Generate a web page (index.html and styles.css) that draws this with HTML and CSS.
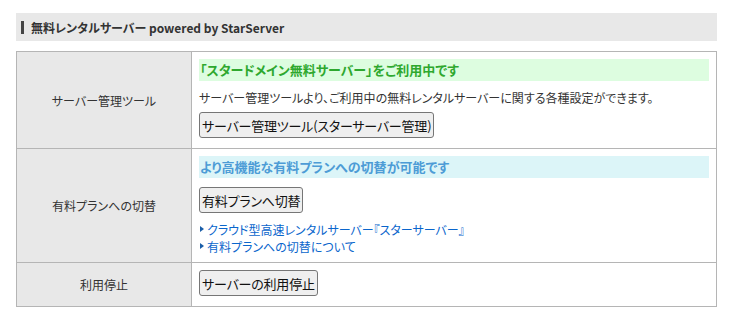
FILE: index.html
```html
<!DOCTYPE html>
<html lang="ja">
<head>
    <meta charset="UTF-8">
    <title>無料レンタルサーバー</title>
    <link rel="stylesheet" href="styles.css">
</head>
<body>
<div class='wrap'>
    <h2 class='boxTitle'>無料レンタルサーバー powered by StarServer</h2>
    <table class='setTable'>
        <tr>
            <th>サーバー管理ツール</th>
            <td>
                <p class='status statusFree'>「スタードメイン無料サーバー」をご利用中です</p>
                <p class='desc'>サーバー管理ツールより、ご利用中の無料レンタルサーバーに関する各種設定ができます。</p>
                <button class='btn'>サーバー管理ツール(スターサーバー管理)</button>
            </td>
        </tr>
        <tr>
            <th>有料プランへの切替</th>
            <td>
                <p class='status statusPaid'>より高機能な有料プランへの切替が可能です</p>
                <button class='btn'>有料プランへ切替</button>
                <ul class='links'>
                    <li><a href="javascript:;">クラウド型高速レンタルサーバー『スターサーバー』</a></li>
                    <li><a href="javascript:;">有料プランへの切替について</a></li>
                </ul>
            </td>
        </tr>
        <tr>
            <th>利用停止</th>
            <td>
                <button class='btn'>サーバーの利用停止</button>
            </td>
        </tr>
    </table>
</div>
</body>
</html>
```

FILE: styles.css
```css
*{
    margin:0;
    padding:0;
}
body{
    font-family:"Noto Sans CJK JP","Liberation Sans",sans-serif;
    font-size:12px;
    font-feature-settings:"palt";
    color:#333;
    background:#fff;
}
ul,li{
    list-style:none;
}
.wrap{
    padding:13px 15px 0 16px;
}
.boxTitle{
    display:flex;
    align-items:center;
    height:28px;
    padding-left:5px;
    margin-bottom:10px;
    background:#e8e8e8;
    font-size:12px;
    font-weight:bold;
    color:#333;
}
.boxTitle:before{
    content:"";
    width:3px;
    height:13px;
    margin-right:7px;
    background:#444;
}
.setTable{
    width:100%;
    border-collapse:collapse;
    border:1px solid #b5b5b5;
}
.setTable th,
.setTable td{
    border:1px solid #b5b5b5;
}
.setTable th{
    width:174px;
    background:#e8e8e8;
    font-weight:normal;
    font-size:12px;
    color:#333;
    text-align:center;
}
.setTable td{
    padding:7px 7px 10px;
    vertical-align:top;
}
.status{
    height:22px;
    line-height:22px;
    padding-left:1px;
    font-size:13px;
    font-weight:bold;
}
.statusFree{
    background:#ddfde0;
    color:#2ea82e;
    margin-bottom:8px;
}
.statusPaid{
    background:#dcf5f8;
    color:#4d9cd6;
    margin-bottom:9px;
}
.desc{
    line-height:18px;
    margin-bottom:5px;
}
.btn{
    display:block;
    height:26px;
    padding:0 2px;
    font-family:"Noto Sans CJK JP","Liberation Sans",sans-serif;
    font-size:13px;
    font-feature-settings:"palt";
    letter-spacing:-0.2px;
    color:#111;
    background:#efefef;
    border:1px solid #767676;
    border-radius:3px;
}
.links{
    margin-top:8px;
    margin-bottom:-3px;
}
.links li{
    position:relative;
    padding-left:8px;
    line-height:17px;
}
.links li:before{
    content:"";
    position:absolute;
    left:1px;
    top:5px;
    border-left:4px solid #1a5ea8;
    border-top:3px solid transparent;
    border-bottom:3px solid transparent;
}
.links a{
    color:#0a66cc;
    text-decoration:none;
}
```
